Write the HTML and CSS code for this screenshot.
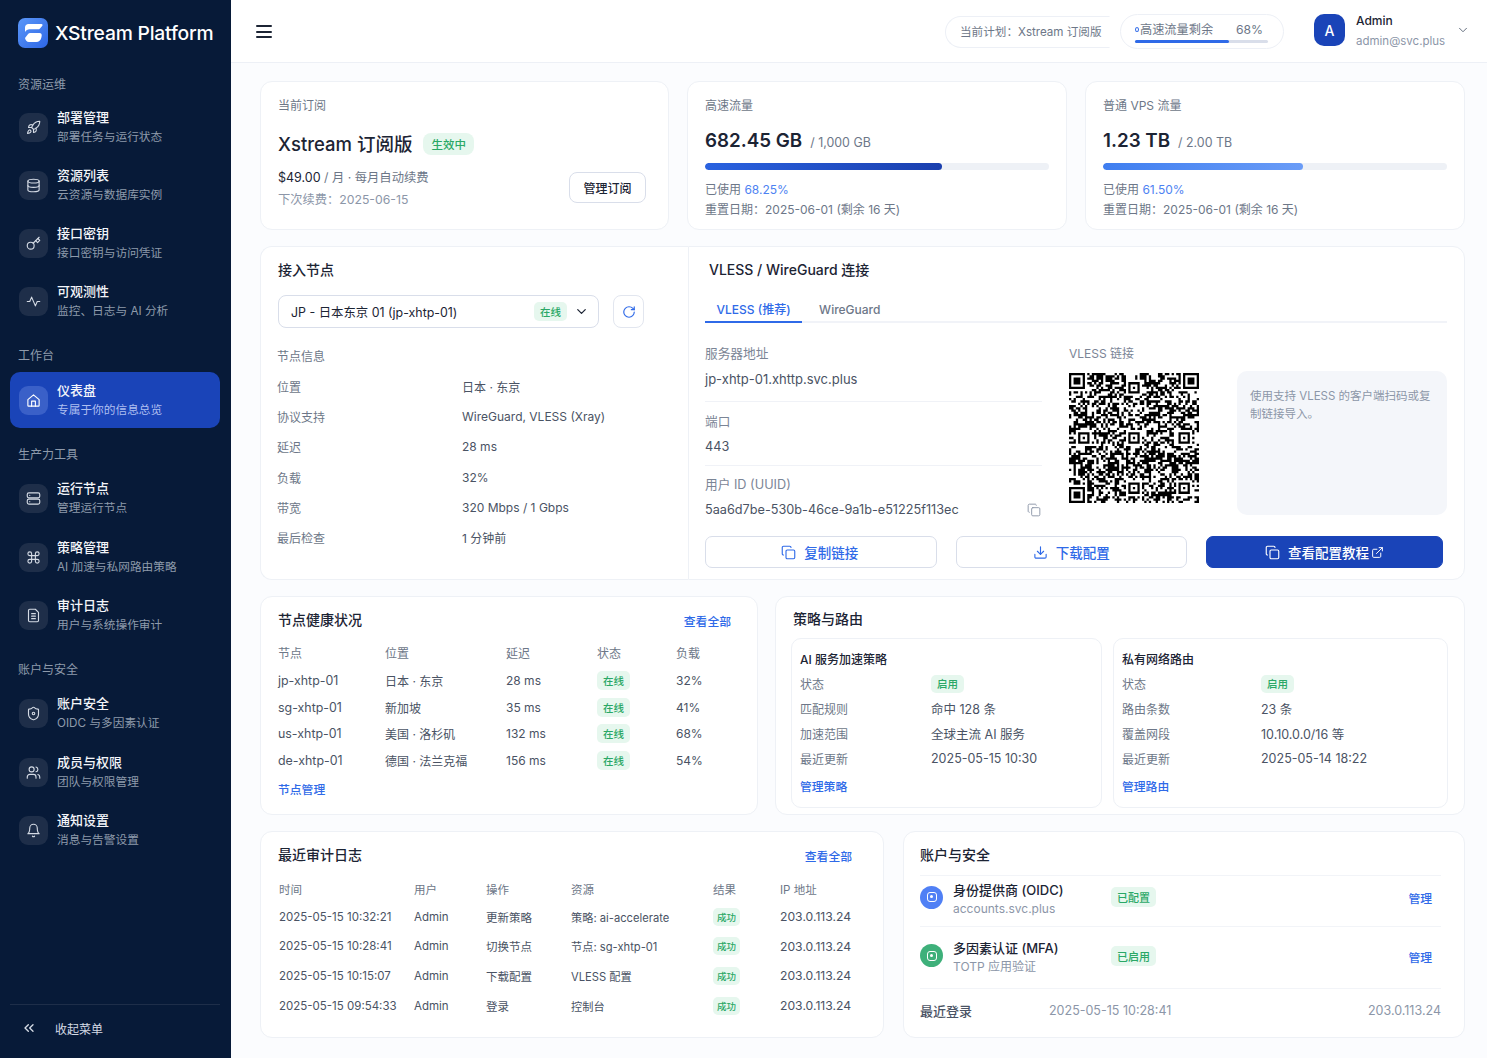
FILE: index.html
```html
<!DOCTYPE html>
<html lang="zh-CN">
<head>
    <meta charset="UTF-8">
    <meta name="viewport" content="width=device-width, initial-scale=1.0">
    <title>XStream Platform</title>
    <link rel="stylesheet" href="styles.css">
</head>
<body>
    <!-- icon sprite -->
    <svg class="sprite" xmlns="http://www.w3.org/2000/svg">
        <symbol id="i-rocket" viewBox="0 0 24 24"><path d="M4.5 16.5c-1.5 1.26-2 5-2 5s3.74-.5 5-2c.71-.84.7-2.13-.09-2.91a2.18 2.18 0 0 0-2.91-.09z"/><path d="m12 15-3-3a22 22 0 0 1 2-3.95A12.88 12.88 0 0 1 22 2c0 2.72-.78 7.5-6 11a22.35 22.35 0 0 1-4 2z"/><path d="M9 12H4s.55-3.03 2-4c1.62-1.08 5 0 5 0"/><path d="M12 15v5s3.03-.55 4-2c1.08-1.62 0-5 0-5"/></symbol>
        <symbol id="i-database" viewBox="0 0 24 24"><ellipse cx="12" cy="5" rx="9" ry="3"/><path d="M3 5V19A9 3 0 0 0 21 19V5"/><path d="M3 12A9 3 0 0 0 21 12"/></symbol>
        <symbol id="i-key" viewBox="0 0 24 24"><circle cx="7.5" cy="15.5" r="5.5"/><path d="m21 2-9.6 9.6"/><path d="m15.5 7.5 3 3L22 7l-3-3"/></symbol>
        <symbol id="i-activity" viewBox="0 0 24 24"><path d="M22 12h-4l-3 7L9 5l-3 7H2"/></symbol>
        <symbol id="i-home" viewBox="0 0 24 24"><path d="M3 10.5 12 3l9 7.5V20a1 1 0 0 1-1 1H4a1 1 0 0 1-1-1z"/><path d="M9 21v-8h6v8"/></symbol>
        <symbol id="i-server" viewBox="0 0 24 24"><rect x="2" y="3" width="20" height="8" rx="2.5"/><rect x="2" y="13" width="20" height="8" rx="2.5"/><path d="M6 7h.01M6 17h.01"/></symbol>
        <symbol id="i-command" viewBox="0 0 24 24"><path d="M15 6v12a3 3 0 1 0 3-3H6a3 3 0 1 0 3 3V6a3 3 0 1 0-3 3h12a3 3 0 1 0-3-3"/></symbol>
        <symbol id="i-file" viewBox="0 0 24 24"><path d="M15 2H6a2 2 0 0 0-2 2v16a2 2 0 0 0 2 2h12a2 2 0 0 0 2-2V7Z"/><path d="M9 9h6M9 13h6M9 17h6"/></symbol>
        <symbol id="i-shield" viewBox="0 0 24 24"><path d="M20 13c0 5-3.5 7.5-7.66 8.95a1 1 0 0 1-.67-.01C7.5 20.5 4 18 4 13V6a1 1 0 0 1 1-1c2 0 4.5-1.2 6.24-2.72a1.17 1.17 0 0 1 1.52 0C14.51 3.81 17 5 19 5a1 1 0 0 1 1 1z"/><circle cx="12" cy="12" r="2"/></symbol>
        <symbol id="i-users" viewBox="0 0 24 24"><path d="M16 21v-2a4 4 0 0 0-4-4H6a4 4 0 0 0-4 4v2"/><circle cx="9" cy="7" r="4"/><path d="M22 21v-2a4 4 0 0 0-3-3.87"/><path d="M16 3.13a4 4 0 0 1 0 7.75"/></symbol>
        <symbol id="i-bell" viewBox="0 0 24 24"><path d="M6 8a6 6 0 0 1 12 0c0 7 3 9 3 9H3s3-2 3-9"/><path d="M10.3 21a1.94 1.94 0 0 0 3.4 0"/></symbol>
        <symbol id="i-collapse" viewBox="0 0 24 24"><path d="m11 17-5-5 5-5"/><path d="m18 17-5-5 5-5"/></symbol>
        <symbol id="i-copy" viewBox="0 0 24 24"><rect x="8" y="8" width="14" height="14" rx="2"/><path d="M4 16c-1.1 0-2-.9-2-2V4c0-1.1.9-2 2-2h10c1.1 0 2 .9 2 2"/></symbol>
        <symbol id="i-download" viewBox="0 0 24 24"><path d="M21 15v4a2 2 0 0 1-2 2H5a2 2 0 0 1-2-2v-4"/><path d="m7 10 5 5 5-5"/><path d="M12 15V3"/></symbol>
        <symbol id="i-external" viewBox="0 0 24 24"><path d="M15 3h6v6"/><path d="M10 14 21 3"/><path d="M18 13v6a2 2 0 0 1-2 2H5a2 2 0 0 1-2-2V8a2 2 0 0 1 2-2h6"/></symbol>
        <symbol id="i-refresh" viewBox="0 0 24 24"><path d="M21 12a9 9 0 1 1-9-9c2.52 0 4.93 1 6.74 2.74L21 8"/><path d="M21 3v5h-5"/></symbol>
        <symbol id="i-chevron" viewBox="0 0 24 24"><path d="m6 9 6 6 6-6"/></symbol>
    </svg>

    <div class="app">
        <!-- Sidebar -->
        <aside class="sidebar">
            <div class="brand">
                <svg class="brand-logo" viewBox="0 0 30 30" xmlns="http://www.w3.org/2000/svg">
                    <defs><linearGradient id="logoFill" x1="0" y1="0" x2="1" y2="1"><stop offset="0" stop-color="#5b97f8"/><stop offset="1" stop-color="#2d66e6"/></linearGradient></defs>
                    <rect width="30" height="30" rx="7" fill="url(#logoFill)"/>
                    <path d="M7 9.500C7 7.500 8.500 6 10.500 6H23.500c.9 0 1.400 1 .8 1.700l-2.300 2.700c-.5.6-1.200.9-2 .9h-8.500c-1.900 0-3.300.8-4.500 2.700z" fill="#fff"/>
                    <path d="M7 20 9.900 16.200c.6-.8 1.400-1.200 2.400-1.200h9.200c1.500 0 2.500 1.200 2.200 2.700l-.4 2c-.5 2.500-2.500 4.300-5 4.300h-7.300C8.700 24 7.400 22.200 7 20z" fill="#fff"/>
                </svg>
                <span class="brand-name">XStream Platform</span>
            </div>

            <nav class="nav">
                <div class="nav-group">
                    <div class="nav-label">资源运维</div>
                    <a class="nav-item"><span class="nav-icon"><svg class="icon"><use href="#i-rocket"/></svg></span><span class="nav-text"><b>部署管理</b><small>部署任务与运行状态</small></span></a>
                    <a class="nav-item"><span class="nav-icon"><svg class="icon"><use href="#i-database"/></svg></span><span class="nav-text"><b>资源列表</b><small>云资源与数据库实例</small></span></a>
                    <a class="nav-item"><span class="nav-icon"><svg class="icon"><use href="#i-key"/></svg></span><span class="nav-text"><b>接口密钥</b><small>接口密钥与访问凭证</small></span></a>
                    <a class="nav-item"><span class="nav-icon"><svg class="icon"><use href="#i-activity"/></svg></span><span class="nav-text"><b>可观测性</b><small>监控、日志与 AI 分析</small></span></a>
                </div>
                <div class="nav-group">
                    <div class="nav-label">工作台</div>
                    <a class="nav-item active"><span class="nav-icon"><svg class="icon"><use href="#i-home"/></svg></span><span class="nav-text"><b>仪表盘</b><small>专属于你的信息总览</small></span></a>
                </div>
                <div class="nav-group">
                    <div class="nav-label">生产力工具</div>
                    <a class="nav-item"><span class="nav-icon"><svg class="icon"><use href="#i-server"/></svg></span><span class="nav-text"><b>运行节点</b><small>管理运行节点</small></span></a>
                    <a class="nav-item"><span class="nav-icon"><svg class="icon"><use href="#i-command"/></svg></span><span class="nav-text"><b>策略管理</b><small>AI 加速与私网路由策略</small></span></a>
                    <a class="nav-item"><span class="nav-icon"><svg class="icon"><use href="#i-file"/></svg></span><span class="nav-text"><b>审计日志</b><small>用户与系统操作审计</small></span></a>
                </div>
                <div class="nav-group">
                    <div class="nav-label">账户与安全</div>
                    <a class="nav-item"><span class="nav-icon"><svg class="icon"><use href="#i-shield"/></svg></span><span class="nav-text"><b>账户安全</b><small>OIDC 与多因素认证</small></span></a>
                    <a class="nav-item"><span class="nav-icon"><svg class="icon"><use href="#i-users"/></svg></span><span class="nav-text"><b>成员与权限</b><small>团队与权限管理</small></span></a>
                    <a class="nav-item"><span class="nav-icon"><svg class="icon"><use href="#i-bell"/></svg></span><span class="nav-text"><b>通知设置</b><small>消息与告警设置</small></span></a>
                </div>
            </nav>

            <div class="collapse"><svg class="icon"><use href="#i-collapse"/></svg><span>收起菜单</span></div>
        </aside>

        <div class="content">
            <!-- Top bar -->
            <header class="topbar">
                <div class="burger"><i></i><i></i><i></i></div>
                <div class="plan-pill">当前计划：Xstream 订阅版</div>
                <div class="traffic-pill">
                    <div class="traffic-row"><span class="traffic-dot"></span><span class="traffic-name">高速流量剩余</span><span class="traffic-num">68%</span></div>
                    <div class="traffic-bar"><div class="traffic-fill"></div></div>
                </div>
                <div class="avatar">A</div>
                <div class="user"><b>Admin</b><small>admin@svc.plus</small></div>
                <svg class="icon user-caret"><use href="#i-chevron"/></svg>
            </header>

            <main class="main">
                <section class="row row-stats">
                    <div class="card stat">
                        <div class="stat-label">当前订阅</div>
                        <div class="plan-title"><h2>Xstream 订阅版</h2><span class="badge badge-lg">生效中</span></div>
                        <div class="plan-foot">
                            <div>
                                <div class="plan-price">$49.00 <em>/ 月 · 每月自动续费</em></div>
                                <div class="plan-next">下次续费：2025-06-15</div>
                            </div>
                            <button class="btn-manage">管理订阅</button>
                        </div>
                    </div>
                    <div class="card stat">
                        <div class="stat-label">高速流量</div>
                        <div class="usage"><strong>682.45 GB</strong><span>/ 1,000 GB</span></div>
                        <div class="bar"><div class="bar-fill fill-dark" style="width: 68.9%"></div></div>
                        <div class="usage-note">已使用 <a>68.25%</a></div>
                        <div class="usage-note">重置日期：2025-06-01 (剩余 16 天)</div>
                    </div>
                    <div class="card stat">
                        <div class="stat-label">普通 VPS 流量</div>
                        <div class="usage"><strong>1.23 TB</strong><span>/ 2.00 TB</span></div>
                        <div class="bar"><div class="bar-fill fill-light" style="width: 58.2%"></div></div>
                        <div class="usage-note">已使用 <a>61.50%</a></div>
                        <div class="usage-note">重置日期：2025-06-01 (剩余 16 天)</div>
                    </div>
                </section>

                <section class="row row-conn">
                    <div class="card node-card">
                        <h3>接入节点</h3>
                        <div class="node-select">
                            <div class="select">
                                <span class="select-text">JP - 日本东京 01 (jp-xhtp-01)</span>
                                <span class="badge">在线</span>
                                <svg class="icon select-caret"><use href="#i-chevron"/></svg>
                            </div>
                            <button class="btn-refresh"><svg class="icon"><use href="#i-refresh"/></svg></button>
                        </div>
                        <div class="node-head">节点信息</div>
                        <dl class="node-info">
                            <dt>位置</dt><dd>日本 · 东京</dd>
                            <dt>协议支持</dt><dd>WireGuard, VLESS (Xray)</dd>
                            <dt>延迟</dt><dd>28 ms</dd>
                            <dt>负载</dt><dd>32%</dd>
                            <dt>带宽</dt><dd>320 Mbps / 1 Gbps</dd>
                            <dt>最后检查</dt><dd>1 分钟前</dd>
                        </dl>
                    </div>
                    <div class="card conn-card">
                        <h3 class="conn-title">VLESS / WireGuard 连接</h3>
                        <div class="tabs">
                            <span class="tab active">VLESS (推荐)</span>
                            <span class="tab">WireGuard</span>
                        </div>
                        <div class="conn-body">
                            <div class="conn-fields">
                                <div class="field">
                                    <label>服务器地址</label>
                                    <div class="field-host">jp-xhtp-01.xhttp.svc.plus</div>
                                </div>
                                <div class="field">
                                    <label>端口</label>
                                    <div>443</div>
                                </div>
                                <div class="field">
                                    <label>用户 ID (UUID)</label>
                                    <div class="uuid"><span>5aa6d7be-530b-46ce-9a1b-e51225f113ec</span><svg class="icon"><use href="#i-copy"/></svg></div>
                                </div>
                            </div>
                            <div class="conn-qr">
                                <label>VLESS 链接</label>
                                <div class="qr" id="qr"></div>
                            </div>
                            <div class="conn-note">使用支持 VLESS 的客户端扫码或复制链接导入。</div>
                        </div>
                        <div class="conn-actions">
                            <button class="btn"><svg class="icon"><use href="#i-copy"/></svg>复制链接</button>
                            <button class="btn"><svg class="icon"><use href="#i-download"/></svg>下载配置</button>
                            <button class="btn btn-primary"><svg class="icon"><use href="#i-copy"/></svg>查看配置教程<svg class="icon icon-ext"><use href="#i-external"/></svg></button>
                        </div>
                    </div>
                </section>

                <section class="row row-health">
                    <div class="card health-card">
                        <div class="card-head"><h3>节点健康状况</h3><a class="link">查看全部</a></div>
                        <table class="table health-table">
                            <thead><tr><th>节点</th><th>位置</th><th>延迟</th><th>状态</th><th>负载</th></tr></thead>
                            <tbody>
                                <tr><td>jp-xhtp-01</td><td>日本 · 东京</td><td>28 ms</td><td><span class="badge">在线</span></td><td>32%</td></tr>
                                <tr><td>sg-xhtp-01</td><td>新加坡</td><td>35 ms</td><td><span class="badge">在线</span></td><td>41%</td></tr>
                                <tr><td>us-xhtp-01</td><td>美国 · 洛杉矶</td><td>132 ms</td><td><span class="badge">在线</span></td><td>68%</td></tr>
                                <tr><td>de-xhtp-01</td><td>德国 · 法兰克福</td><td>156 ms</td><td><span class="badge">在线</span></td><td>54%</td></tr>
                            </tbody>
                        </table>
                        <a class="link health-more">节点管理</a>
                    </div>
                    <div class="card route-card">
                        <h3>策略与路由</h3>
                        <div class="route-grid">
                            <div class="route-box">
                                <h4>AI 服务加速策略</h4>
                                <dl class="route-info">
                                    <dt>状态</dt><dd><span class="badge">启用</span></dd>
                                    <dt>匹配规则</dt><dd>命中 128 条</dd>
                                    <dt>加速范围</dt><dd>全球主流 AI 服务</dd>
                                    <dt>最近更新</dt><dd>2025-05-15 10:30</dd>
                                </dl>
                                <a class="link">管理策略</a>
                            </div>
                            <div class="route-box">
                                <h4>私有网络路由</h4>
                                <dl class="route-info">
                                    <dt>状态</dt><dd><span class="badge">启用</span></dd>
                                    <dt>路由条数</dt><dd>23 条</dd>
                                    <dt>覆盖网段</dt><dd>10.10.0.0/16 等</dd>
                                    <dt>最近更新</dt><dd>2025-05-14 18:22</dd>
                                </dl>
                                <a class="link">管理路由</a>
                            </div>
                        </div>
                    </div>
                </section>

                <section class="row row-audit">
                    <div class="card audit-card">
                        <div class="card-head"><h3>最近审计日志</h3><a class="link">查看全部</a></div>
                        <table class="table audit-table">
                            <thead><tr><th>时间</th><th>用户</th><th>操作</th><th>资源</th><th>结果</th><th>IP 地址</th></tr></thead>
                            <tbody>
                                <tr><td>2025-05-15 10:32:21</td><td>Admin</td><td>更新策略</td><td>策略: ai-accelerate</td><td><span class="badge badge-sm">成功</span></td><td>203.0.113.24</td></tr>
                                <tr><td>2025-05-15 10:28:41</td><td>Admin</td><td>切换节点</td><td>节点: sg-xhtp-01</td><td><span class="badge badge-sm">成功</span></td><td>203.0.113.24</td></tr>
                                <tr><td>2025-05-15 10:15:07</td><td>Admin</td><td>下载配置</td><td>VLESS 配置</td><td><span class="badge badge-sm">成功</span></td><td>203.0.113.24</td></tr>
                                <tr><td>2025-05-15 09:54:33</td><td>Admin</td><td>登录</td><td>控制台</td><td><span class="badge badge-sm">成功</span></td><td>203.0.113.24</td></tr>
                            </tbody>
                        </table>
                    </div>
                    <div class="card account-card">
                        <h3>账户与安全</h3>
                        <div class="account-row account-first">
                            <span class="account-icon oidc"><i></i></span>
                            <div class="account-text"><b>身份提供商 (OIDC)</b><small>accounts.svc.plus</small></div>
                            <span class="badge badge-md">已配置</span>
                            <a class="link">管理</a>
                        </div>
                        <div class="account-row">
                            <span class="account-icon mfa"><i></i></span>
                            <div class="account-text"><b>多因素认证 (MFA)</b><small>TOTP 应用验证</small></div>
                            <span class="badge badge-md">已启用</span>
                            <a class="link">管理</a>
                        </div>
                        <div class="last-login"><b>最近登录</b><span>2025-05-15 10:28:41</span><span>203.0.113.24</span></div>
                    </div>
                </section>
            </main>
        </div>
    </div>
    <script src="qr.js"></script>
</body>
</html>
```

FILE: styles.css
```css
/* Page */
* {
    box-sizing: border-box;
}

body {
    margin: 0;
    background: #fbfcfe;
    color: #1c2434;
    font-family: 'Inter', 'Noto Sans CJK SC', sans-serif;
    font-size: 12px;
}

h2, h3, h4, dl, dd {
    margin: 0;
}

.sprite {
    display: none;
}

.icon {
    width: 16px;
    height: 16px;
    fill: none;
    stroke: currentColor;
    stroke-width: 2;
    stroke-linecap: round;
    stroke-linejoin: round;
    flex: none;
}

.app {
    display: flex;
    height: 1058px;
    overflow: hidden;
}

/* Sidebar */
.sidebar {
    width: 231px;
    flex: none;
    display: flex;
    flex-direction: column;
    background: #071a38;
    color: #fff;
    padding: 18px 11px 0 10px;
}

.brand {
    display: flex;
    align-items: center;
    gap: 7px;
    padding-left: 8px;
    height: 30px;
}

.brand-logo {
    width: 30px;
    height: 30px;
    flex: none;
}

.brand-name {
    font-size: 19.3px;
    font-weight: 500;
    letter-spacing: -0.2px;
    white-space: nowrap;
}

.nav {
    flex: 1;
    padding-top: 28px;
}

.nav-group {
    margin-bottom: 17.5px;
}

.nav-label {
    height: 18px;
    line-height: 18px;
    padding-left: 8px;
    margin-bottom: 7px;
    color: #8e9aab;
    font-size: 12px;
}

.nav-group:first-child .nav-label {
    margin-bottom: 5px;
}

.nav-item {
    display: flex;
    align-items: center;
    gap: 9px;
    height: 56px;
    margin-bottom: 2.3px;
    padding-left: 9px;
    border-radius: 10px;
}

.nav-item.active {
    background: #1a44b8;
}

.nav-icon {
    width: 29px;
    height: 29px;
    display: flex;
    align-items: center;
    justify-content: center;
    border-radius: 9px;
    background: #1e2e49;
    color: #d5dbe5;
}

.nav-icon .icon {
    width: 15px;
    height: 15px;
    stroke-width: 1.8;
}

.nav-item.active .nav-icon {
    background: #3a60c8;
    color: #fff;
}

.nav-text {
    display: flex;
    flex-direction: column;
    gap: 3px;
}

.nav-item.active .nav-text {
    padding-top: 1px;
}

.nav-text b {
    font-size: 13px;
    line-height: 17px;
    font-weight: 500;
    color: #f3f5f9;
}

.nav-text small {
    font-size: 11.7px;
    line-height: 17px;
    color: #8e9aab;
}

.nav-item.active small {
    color: #aebff0;
}

.collapse {
    display: flex;
    align-items: center;
    gap: 18px;
    height: 54px;
    padding: 0 0 7px 11px;
    border-top: 1px solid #1e2e49;
    font-size: 12px;
    color: #d5dbe5;
}

/* Top bar */
.content {
    flex: 1;
    min-width: 0;
}

.topbar {
    display: flex;
    align-items: center;
    height: 63px;
    padding: 1px 17px 0 25px;
    background: #fff;
    border-bottom: 1px solid #edf0f6;
}

.burger {
    width: 16px;
    margin-right: auto;
    display: flex;
    flex-direction: column;
    gap: 3.5px;
}

.burger i {
    height: 2px;
    background: #1c2434;
    border-radius: 1px;
}

.plan-pill {
    width: 165px;
    height: 32px;
    line-height: 30px;
    padding-left: 14px;
    border: 1px solid #edf0f6;
    border-right-color: transparent;
    border-radius: 16px 0 0 16px;
    color: #6d7788;
    font-size: 11.6px;
    white-space: nowrap;
    margin-right: 10px;
}

.traffic-pill {
    width: 164px;
    height: 35px;
    padding: 5px 15px 0 14px;
    border: 1px solid #edf0f6;
    border-radius: 18px;
    margin-right: 30px;
}

.traffic-row {
    display: flex;
    align-items: center;
    height: 18px;
    color: #6d7788;
    font-size: 12.2px;
}

.traffic-dot {
    width: 4px;
    height: 5px;
    margin-right: 1px;
    border: 1px solid #2f6ae8;
    border-radius: 50%;
}

.traffic-name {
    flex: 1;
}

.traffic-num {
    padding-right: 5px;
}

.traffic-bar {
    height: 3px;
    margin-top: 2px;
    border-radius: 2px;
    background: #d9deea;
}

.traffic-fill {
    width: 71%;
    height: 100%;
    border-radius: 2px;
    background: #2f6ae8;
}

.avatar {
    width: 31px;
    height: 32px;
    margin: 0 11px 3px 0;
    display: flex;
    align-items: center;
    justify-content: center;
    border-radius: 10px;
    background: #1a44b8;
    color: #fff;
    font-size: 14px;
    font-weight: 500;
}

.user {
    display: flex;
    flex-direction: column;
    gap: 4px;
    width: 100px;
    margin-bottom: 2px;
}

.user b {
    font-size: 12px;
    line-height: 16px;
    font-weight: 500;
}

.user small {
    font-size: 11.5px;
    line-height: 16px;
    color: #8c96a8;
}

.user-caret {
    width: 14px;
    height: 14px;
    margin-bottom: 3px;
    color: #5a6576;
    stroke-width: 1.6;
}

/* Dashboard rows */
.main {
    padding: 18px 22px 0 29px;
}

.row {
    display: grid;
    margin-bottom: 16px;
}

.row-stats {
    grid-template-columns: 409px 380px 380px;
    column-gap: 18px;
    height: 149px;
}

.row-conn {
    grid-template-columns: 428px 777px;
    height: 334px;
}

.row-health {
    grid-template-columns: 498px 690px;
    column-gap: 17px;
    height: 219px;
}

.row-audit {
    grid-template-columns: 624px 562px;
    column-gap: 19px;
    height: 207px;
}

.card {
    background: #fff;
    border: 1px solid #eef1f6;
    border-radius: 12px;
}

h3 {
    font-size: 14px;
    line-height: 20px;
    font-weight: 500;
}

.card-head {
    display: flex;
    justify-content: space-between;
    align-items: center;
}

.link {
    color: #2f6ae8;
    font-size: 11.8px;
    font-weight: 500;
}

.badge {
    display: inline-flex;
    align-items: center;
    justify-content: center;
    height: 19px;
    padding: 0 6px;
    border-radius: 5px;
    background: #e6f7ee;
    color: #2aa866;
    font-size: 10.5px;
    font-weight: 500;
}

.badge-lg {
    height: 22px;
    padding: 0 8px;
    border-radius: 8px;
    font-size: 11.5px;
}

.badge-md {
    height: 20px;
    padding: 0 6px;
    font-size: 11px;
}

.badge-sm {
    height: 18px;
    padding: 0 4px;
    font-size: 9.5px;
}

/* Stat cards */
.stat {
    padding: 15px 17px 0;
}

.stat-label {
    height: 18px;
    line-height: 18px;
    color: #6d7788;
    font-size: 12px;
}

.plan-title {
    display: flex;
    align-items: center;
    gap: 11px;
    margin-top: 16px;
    height: 26px;
}

.plan-title h2 {
    font-size: 18.5px;
    font-weight: 500;
    line-height: 26px;
}

.plan-foot {
    display: flex;
    justify-content: space-between;
    align-items: center;
    margin: 10px 5px 0 0;
}

.plan-price {
    font-size: 12.5px;
    line-height: 22px;
}

.plan-price em {
    font-style: normal;
    color: #6d7788;
    font-size: 12.3px;
}

.plan-next {
    line-height: 22px;
    color: #8c96a8;
    font-size: 12.25px;
}

.btn-manage {
    width: 77px;
    height: 31px;
    margin-top: -4px;
    background: #fff;
    border: 1px solid #d9deea;
    border-radius: 8px;
    font: inherit;
    font-weight: 500;
    color: #1c2434;
}

.usage {
    display: flex;
    align-items: baseline;
    gap: 8px;
    margin-top: 14px;
    height: 26px;
}

.usage strong {
    font-size: 18.8px;
    font-weight: 600;
}

.usage span {
    font-size: 12.4px;
    color: #6d7788;
}

.bar {
    height: 7px;
    margin: 8px 0 0;
    border-radius: 4px;
    background: #eef1f6;
    overflow: hidden;
}

.bar-fill {
    height: 100%;
    border-radius: 4px;
}

.fill-dark {
    background: linear-gradient(90deg, #2a62e0, #1a3fae);
}

.fill-light {
    background: linear-gradient(90deg, #3f7ef0, #6a9cf7);
}

.bar + .usage-note {
    margin-top: 10px;
}

.usage-note {
    line-height: 20px;
    color: #6d7788;
    font-size: 12px;
}

.usage-note a {
    color: #4d82f2;
}

/* Node selection */
.node-card {
    padding: 13px 17px 0;
    border-right: none;
    border-radius: 12px 0 0 12px;
}

.node-select {
    display: flex;
    gap: 14px;
    margin-top: 15px;
}

.select {
    width: 321px;
    height: 33px;
    flex: none;
    display: flex;
    align-items: center;
    padding: 0 9px 0 12px;
    border: 1px solid #d9deea;
    border-radius: 8px;
}

.select-text {
    flex: 1;
    font-size: 12.4px;
}

.select .badge {
    width: 33px;
}

.select-caret {
    margin-left: 7px;
    width: 15px;
    height: 15px;
}

.btn-refresh {
    width: 31px;
    height: 33px;
    padding: 0;
    display: flex;
    align-items: center;
    justify-content: center;
    background: #fff;
    border: 1px solid #e2e6ef;
    border-radius: 8px;
    color: #2f6ae8;
}

.btn-refresh .icon {
    width: 14px;
    height: 14px;
}

.node-head {
    margin-top: 20px;
    margin-left: -1px;
    line-height: 18px;
    color: #6d7788;
}

.node-info {
    display: grid;
    grid-template-columns: 185px 1fr;
    grid-auto-rows: 30.3px;
    align-items: center;
    margin: 5px 0 0 -1px;
}

.node-info dt {
    color: #6d7788;
}

.node-info dd {
    color: #4a5364;
}

/* Connection card */
.conn-card {
    padding: 13px 17px 0 16px;
    border-radius: 0 12px 12px 0;
}

.conn-title {
    padding-left: 4px;
}

.tabs {
    display: flex;
    gap: 17px;
    height: 31px;
    margin-top: 12px;
    border-bottom: 2px solid #f1f3f8;
}

.tab {
    padding: 9px 11.5px 0;
    height: 31px;
    line-height: 18px;
    color: #6d7788;
    font-weight: 500;
}

.tab:last-child {
    padding: 9px 0 0;
}

.tab.active {
    color: #2f6ae8;
    border-bottom: 2px solid #2f6ae8;
}

.conn-body {
    display: grid;
    grid-template-columns: 337px 195px 210px;
    margin-top: 20px;
}

.conn-fields label,
.conn-qr label {
    display: block;
    line-height: 18px;
    color: #7b8596;
}

.field {
    height: 64px;
    padding-top: 11px;
    border-bottom: 1px solid #f0f2f7;
    color: #4a5364;
    font-size: 12.7px;
}

.field div {
    margin-top: 7px;
    line-height: 18px;
}

.field:first-child {
    height: 59px;
    padding-top: 2px;
}

.field:last-child {
    height: 49px;
    padding-top: 10px;
    border-bottom: none;
}

.field-host {
    font-size: 13px;
}

.uuid {
    display: flex;
    justify-content: space-between;
    align-items: center;
}

.uuid .icon {
    width: 14px;
    height: 14px;
    color: #8c96a8;
    stroke-width: 1.6;
    margin-right: 1px;
}

.conn-qr {
    padding: 2px 0 0 27px;
}

.qr {
    width: 130px;
    height: 130px;
    margin-top: 10px;
}

.qr svg {
    display: block;
    width: 100%;
    height: 100%;
}

.conn-note {
    height: 144px;
    margin-top: 28px;
    padding: 16px 13px;
    background: #f4f6fa;
    border-radius: 10px;
    color: #8c96a8;
    font-size: 11.5px;
    line-height: 18px;
}

.conn-actions {
    display: flex;
    margin-top: 21px;
}

.btn {
    display: flex;
    align-items: center;
    justify-content: center;
    gap: 8px;
    width: 231.5px;
    height: 32px;
    margin-right: 19px;
    background: #fff;
    border: 1px solid #d9deea;
    border-radius: 7px;
    color: #2f6ae8;
    font: inherit;
    font-size: 13.5px;
    font-weight: 500;
}

.btn:first-child {
    padding-right: 8px;
}

.btn .icon {
    width: 15px;
    height: 15px;
    stroke-width: 1.8;
}

.btn-primary {
    width: 237px;
    margin-right: 0;
    background: #1a44b8;
    border-color: #1a44b8;
    color: #fff;
}

.btn-primary .icon-ext {
    width: 13px;
    height: 13px;
    margin-left: -6px;
}

/* Tables */
.table {
    width: 100%;
    border-collapse: collapse;
    table-layout: fixed;
}

.table th {
    padding: 2px 0 0;
    font-weight: 400;
    text-align: left;
    vertical-align: top;
    color: #6d7788;
}

.table td {
    padding: 0;
    color: #4a5364;
}

/* Node health */
.health-card {
    padding: 13px 26px 0 17px;
}

.health-table {
    margin-top: 12px;
}

.health-table th:nth-child(1) { width: 107px; }
.health-table th:nth-child(2) { width: 121px; }
.health-table th:nth-child(3) { width: 91px; }
.health-table th:nth-child(4) { width: 79px; }

.health-table thead tr {
    height: 25px;
}

.health-table tbody tr {
    height: 26.8px;
}

.health-table td:first-child {
    font-size: 12.4px;
}

.health-more {
    display: block;
    margin-top: 6px;
}

/* Routes */
.route-card {
    padding: 12px 17px 0 15px;
    border-radius: 12px;
}

.route-card h3 {
    padding-left: 2px;
}

.route-grid {
    display: grid;
    grid-template-columns: 311px 335px;
    column-gap: 11px;
    margin-top: 9px;
}

.route-box {
    height: 170px;
    padding: 12px 8px 0;
    border: 1px solid #eef1f6;
    border-radius: 10px;
}

.route-box h4 {
    font-size: 12px;
    line-height: 18px;
    font-weight: 500;
}

.route-info {
    display: grid;
    grid-template-columns: 131px 1fr;
    grid-auto-rows: 25px;
    align-items: center;
    margin-top: 2px;
}

.route-box:last-child .route-info {
    grid-template-columns: 139px 1fr;
}

.route-info dt {
    color: #6d7788;
}

.route-info dd {
    color: #4a5364;
    font-size: 12.5px;
}

.route-info .badge {
    height: 18px;
    padding: 0 6px;
    font-size: 10.5px;
}

.route-box .link {
    display: block;
    margin-top: 6px;
}

/* Audit log */
.audit-card {
    padding: 13px 31px 0 18px;
}

.audit-card .card-head {
    margin-left: -1px;
}

.audit-table {
    margin-top: 14px;
    font-size: 11.5px;
}

.audit-table th:nth-child(1) { width: 135px; }
.audit-table th:nth-child(2) { width: 72px; }
.audit-table th:nth-child(3) { width: 85px; }
.audit-table th:nth-child(4) { width: 142px; }
.audit-table th:nth-child(5) { width: 67px; }

.audit-table thead tr {
    height: 23px;
}

.audit-table tbody tr {
    height: 29.6px;
}

.audit-table td:nth-child(4) {
    font-size: 11.2px;
}

.audit-table td:last-child {
    font-size: 12.2px;
}

/* Account */
.account-card {
    padding: 13px 23px 0 16px;
}

.account-card h3 {
    margin-bottom: 10px;
}

.account-row {
    display: flex;
    align-items: center;
    height: 62px;
    border-top: 1px solid #f2f4f8;
    padding-right: 9px;
}

.account-first {
    height: 51px;
    padding-bottom: 4px;
}

.account-icon {
    width: 23px;
    height: 23px;
    display: flex;
    align-items: center;
    justify-content: center;
    border-radius: 50%;
    margin: -4px 10px 0 0;
}

.account-icon i {
    width: 10px;
    height: 10px;
    border: 1.5px solid #fff;
    border-radius: 3px;
    display: block;
    position: relative;
}

.account-icon i::after {
    content: "";
    position: absolute;
    left: 2px;
    top: 2px;
    width: 3px;
    height: 3px;
    border-radius: 50%;
    background: #fff;
}

.oidc {
    background: #5080f5;
}

.mfa {
    background: #3eb07a;
}

.account-text {
    width: 158px;
    display: flex;
    flex-direction: column;
    gap: 1px;
}

.account-text b {
    font-size: 13px;
    line-height: 18px;
    font-weight: 500;
}

.account-text small {
    font-size: 12px;
    line-height: 18px;
    color: #8c96a8;
}

.account-row .badge {
    margin-top: -4px;
}

.account-row .link {
    margin: -3px 0 0 auto;
}

.last-login {
    display: flex;
    align-items: center;
    height: 44px;
    border-top: 1px solid #f2f4f8;
    color: #8c96a8;
    font-size: 12.5px;
}

.last-login b {
    width: 129px;
    font-size: 13px;
    font-weight: 500;
    color: #4a5364;
}

.last-login span:last-child {
    margin-left: auto;
}
```

FILE: qr.js
```js
// Draws the connection QR as an SVG: three finder squares, a grid of
// alignment squares and seeded noise for the data modules.
const SIZE = 57;
let seed = 20250515;

function next() {
    seed = (seed * 1664525 + 1013904223) % 4294967296;
    return seed / 4294967296;
}

const cells = [];
for (let y = 0; y < SIZE; y++) {
    cells[y] = [];
    for (let x = 0; x < SIZE; x++) {
        cells[y][x] = next() > 0.5;
    }
}

function square(cx, cy, r) {
    for (let y = cy - r - 1; y <= cy + r + 1; y++) {
        for (let x = cx - r - 1; x <= cx + r + 1; x++) {
            if (!cells[y] || x < 0 || x >= SIZE) continue;
            const d = Math.max(Math.abs(x - cx), Math.abs(y - cy));
            cells[y][x] = r === 3 ? (d !== 2 && d !== 4) : d !== 1 && d <= 2 && d !== 3;
        }
    }
}

[6, 28, 50].forEach(y => {
    [6, 28, 50].forEach(x => {
        const corner = (x === 6 && y === 6) || (x === 50 && y === 6) || (x === 6 && y === 50);
        if (corner) return;
        square(x, y, 2);
    });
});
square(3, 3, 3);
square(53, 3, 3);
square(3, 53, 3);

let d = '';
cells.forEach((row, y) => {
    row.forEach((on, x) => {
        if (on) d += 'M' + x + ' ' + y + 'h1v1h-1z';
    });
});

document.getElementById('qr').innerHTML =
    '<svg xmlns="http://www.w3.org/2000/svg" viewBox="0 0 57 57"><path fill="#000" d="' + d + '"/></svg>';
```
